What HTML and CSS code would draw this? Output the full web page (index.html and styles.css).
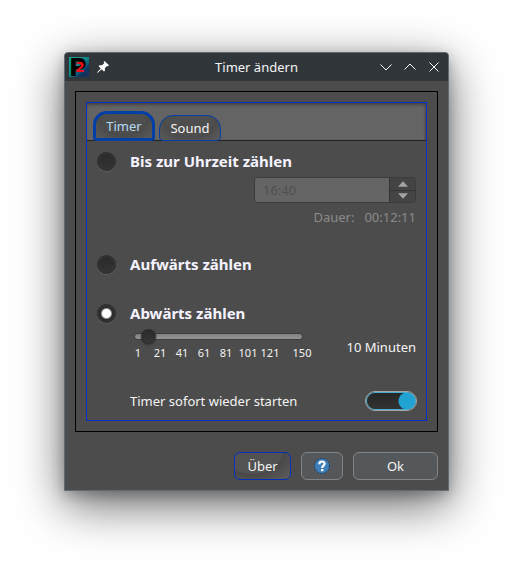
FILE: index.html
```html
<!DOCTYPE html>
<html lang="de">
<head>
<meta charset="utf-8">
<meta name="viewport" content="width=device-width, initial-scale=1">
<title>Timer ändern</title>
<link rel="stylesheet" href="styles.css">
</head>
<body>
<main class="window">
  <header class="titlebar">
    <div class="title-start">
      <svg class="app-icon" viewBox="0 0 20 20" aria-hidden="true">
        <defs>
          <linearGradient id="app-bg" x1="0" y1="0" x2="1" y2="1">
            <stop offset="0" stop-color="#12a5a0"/>
            <stop offset=".5" stop-color="#0c8585"/>
            <stop offset=".75" stop-color="#10345f"/>
            <stop offset="1" stop-color="#1d2f5c"/>
          </linearGradient>
        </defs>
        <rect width="20" height="20" fill="url(#app-bg)"/>
        <text class="icon-p" x="0" y="19">P</text>
        <text class="icon-two" x="6" y="15">2</text>
      </svg>
      <svg class="pin" viewBox="0 0 12 12" aria-hidden="true">
        <path d="M7.5 0 12 4.2 11 5.2 10 5 7.8 7.2 8 9.5 7 10.5 4.6 8.2 1 11.6 0 12 .4 11 3.8 7.4 1.6 5.2 2.6 4.2 5 4.3 7.2 2.2 6.6 1Z" fill="#fff"/>
      </svg>
    </div>
    <h1 class="title">Timer ändern</h1>
    <div class="title-end">
      <button class="win-btn" aria-label="Minimieren"><svg viewBox="0 0 12 12"><path d="M.5 3.5 6 9l5.500-5.500"/></svg></button>
      <button class="win-btn" aria-label="Maximieren"><svg viewBox="0 0 12 12"><path d="M.5 8.500 6 3l5.500 5.500"/></svg></button>
      <button class="win-btn" aria-label="Schließen"><svg viewBox="0 0 12 12"><path d="m1.500 1.500 9 9m0-9-9 9"/></svg></button>
    </div>
  </header>
  <div class="content">
    <div class="frame">
      <div class="tab-pane">
        <div class="tabs" role="tablist">
          <button class="tab active" role="tab" aria-selected="true">Timer</button>
          <button class="tab" role="tab" aria-selected="false">Sound</button>
        </div>
        <form class="options">
          <div class="option">
            <input class="radio" type="radio" name="mode" id="until">
            <label class="option-label" for="until">Bis zur Uhrzeit zählen</label>
          </div>
          <div class="spinner">
            <input class="time" type="text" value="16:40" aria-label="Uhrzeit" disabled>
            <div class="steps">
              <button class="step" type="button" aria-label="Später" disabled><svg viewBox="0 0 9 5"><path d="M4.500 0 9 5H0Z"/></svg></button>
              <button class="step" type="button" aria-label="Früher" disabled><svg viewBox="0 0 9 5"><path d="M0 0h9L4.500 5Z"/></svg></button>
            </div>
          </div>
          <div class="duration"><span>Dauer:</span><span>00:12:11</span></div>
          <div class="option up">
            <input class="radio" type="radio" name="mode" id="up">
            <label class="option-label" for="up">Aufwärts zählen</label>
          </div>
          <div class="option down">
            <input class="radio" type="radio" name="mode" id="down" checked>
            <label class="option-label" for="down">Abwärts zählen</label>
          </div>
          <div class="minutes">
            <div class="scale">
              <input class="slider" type="range" min="1" max="150" value="10" aria-label="Minuten">
              <div class="ticks">
                <span>1</span><span>21</span><span>41</span><span>61</span><span>81</span><span>101</span><span>121</span><span class="last">150</span>
              </div>
            </div>
            <output class="value">10 Minuten</output>
          </div>
          <div class="restart">
            <label for="restart">Timer sofort wieder starten</label>
            <input class="switch" type="checkbox" role="switch" id="restart" checked>
          </div>
        </form>
      </div>
    </div>
    <footer class="actions">
      <button class="btn about">Über</button>
      <button class="btn help" aria-label="Hilfe">
        <svg viewBox="0 0 16 16" aria-hidden="true">
          <circle cx="8" cy="8" r="7.500" fill="#3f7fb9" stroke="#1d3e5f" stroke-dasharray="2 1"/>
          <path d="M5.300 6.200C5.300 2.600 10.700 2.700 10.600 5.800 10.500 7.700 8.200 7.700 8.200 10" fill="none" stroke="#fff" stroke-width="2.200"/>
          <rect x="7" y="11" width="2.400" height="2.200" fill="#fff"/>
        </svg>
      </button>
      <button class="btn ok">Ok</button>
    </footer>
  </div>
</main>
</body>
</html>
```
FILE: styles.css
```css
* {
  box-sizing: border-box;
}

body {
  margin: 0;
  padding: 52px 64px 76px;
  background: #fff;
  color: #f4f4f4;
  font: 13px/18px "Noto Sans", sans-serif;
}

button,
input {
  margin: 0;
  padding: 0;
  color: inherit;
  font: inherit;
}

.window {
  border: 1px solid #606b73;
  border-radius: 4px 4px 0 0;
  background: #4c4c4c;
  box-shadow: 0 14px 48px rgba(0, 0, 0, .6), 0 4px 14px rgba(0, 0, 0, .25);
}

.titlebar {
  display: grid;
  grid-template-columns: 1fr auto 1fr;
  align-items: center;
  height: 28px;
  padding: 0 4px;
  border-radius: 3px 3px 0 0;
  background: #31363b;
}

.title-start,
.title-end {
  display: flex;
  align-items: center;
}

.title-start {
  gap: 8px;
}

.title-end {
  justify-content: flex-end;
  gap: 12px;
  padding-right: 4px;
}

.title {
  margin: 0;
  font-size: 13px;
  font-weight: 400;
}

.app-icon {
  width: 20px;
  height: 20px;
}

.icon-p {
  fill: #000;
  font: 700 24px "DejaVu Sans", sans-serif;
}

.icon-two {
  fill: #f00c18;
  font: 700 14px "DejaVu Sans", sans-serif;
}

.pin {
  width: 12px;
  height: 12px;
}

.win-btn {
  display: flex;
  border: 0;
  background: none;
}

.win-btn svg {
  width: 12px;
  height: 12px;
  fill: none;
  stroke: #fcfcfc;
}

.content {
  padding: 10px;
}

.frame {
  padding: 10px;
  border: 1px solid #000;
}

.tab-pane {
  border: 1px solid #0030c8;
}

.tabs {
  display: flex;
  align-items: flex-end;
  gap: 4px;
  height: 38px;
  padding: 0 6px;
  border-bottom: 1px solid #222;
  background: #646464;
  box-shadow: inset 0 3px 3px -1px #444, inset -2px 0 2px -1px #444;
}

.tab {
  width: 62px;
  height: 26px;
  margin-bottom: -1px;
  border: 1px solid #003fa8;
  border-radius: 14px 14px 4px 4px;
  background: radial-gradient(ellipse at 50% 0, #4e4e4e 0 60%, #4a4a4a 61%, #5c5c5c);
}

.tab.active {
  height: 30px;
  border-width: 3px;
  color: #b5dcf5;
}

.options {
  padding: 9px 10px;
}

.option {
  display: flex;
  align-items: center;
  gap: 14px;
  height: 22px;
}

.option-label {
  font-size: 15px;
  font-weight: 700;
  color: #f5f3ff;
}

.radio {
  width: 19px;
  height: 19px;
  border: 1px solid #2b2b2b;
  border-radius: 50%;
  appearance: none;
  background: linear-gradient(#2a2a2a, #343434);
  box-shadow: inset 0 0 0 1px #383838, 0 1px 0 #606060;
}

.radio:checked {
  background: radial-gradient(circle, #fff 0 4px, #2c2c2c 6px);
}

.spinner {
  display: flex;
  width: 162px;
  height: 26px;
  margin: 5px 0 0 auto;
  border: 1px solid #3c3c3c;
  border-radius: 3px;
  background: #656565;
}

.time {
  flex: 1;
  min-width: 0;
  padding: 0 8px;
  border: 0;
  background: none;
  color: #505050;
}

.steps {
  display: grid;
  width: 26px;
  border-left: 1px solid #333;
  background: #444;
}

.step {
  display: grid;
  place-items: center;
  border: 0;
  background: none;
}

.step + .step {
  border-top: 1px solid #353535;
}

.step svg {
  width: 10px;
  height: 6px;
  fill: #a4a4a4;
}

.duration {
  display: flex;
  justify-content: flex-end;
  gap: 10px;
  margin-top: 5px;
  color: #8b8b8b;
}

.up {
  margin-top: 27px;
}

.down {
  margin-top: 27px;
}

.minutes {
  display: flex;
  align-items: center;
  justify-content: space-between;
  margin: 4px 0 0 30px;
}

.scale {
  width: 186px;
}

.slider {
  display: block;
  width: 169px;
  height: 16px;
  margin-left: 7px;
  appearance: none;
  background: none;
}

.slider::-webkit-slider-runnable-track {
  height: 7px;
  border: 1px solid #3d3d3d;
  border-radius: 4px;
  background: linear-gradient(#808080, #949494);
}

.slider::-webkit-slider-thumb {
  width: 15px;
  height: 15px;
  margin: -5px 0 0 -3px;
  border: 1px solid #292929;
  border-radius: 50%;
  appearance: none;
  background: linear-gradient(#2a2a2a, #383838);
  box-shadow: 0 1px 2px #333;
}

.ticks {
  display: grid;
  grid-template-columns: repeat(7, 22fr) 10fr 22fr;
  margin-top: 1px;
  font-size: 11px;
  line-height: 16px;
  text-align: center;
}

.ticks span {
  display: flex;
  justify-content: center;
}

.ticks .last {
  grid-column: 9;
}

.value {
  margin-top: 5px;
}

.restart {
  display: flex;
  align-items: center;
  justify-content: space-between;
  margin: 30px 0 0 33px;
}

.switch {
  width: 52px;
  height: 20px;
  margin-right: -1px;
  border: 1px solid #a6a6a6;
  border-radius: 10px;
  appearance: none;
  background: radial-gradient(circle at 41px 50%, #20a3d2 0 8px, transparent 9px), linear-gradient(#262626, #333);
  box-shadow: inset 0 0 0 1px #45acd3;
}

.actions {
  display: flex;
  justify-content: flex-end;
  gap: 10px;
  margin-top: 20px;
}

.btn {
  display: grid;
  place-items: center;
  height: 28px;
  border: 1px solid #828486;
  border-radius: 6px;
  background: #54585b;
}

.about {
  width: 57px;
  border-color: #0030c0;
  background: radial-gradient(ellipse at 30% 0, #525252 0 55%, #484848 57%, #5e5e5e);
}

.help {
  width: 42px;
}

.help svg {
  width: 16px;
  height: 16px;
}

.ok {
  width: 85px;
}
```
